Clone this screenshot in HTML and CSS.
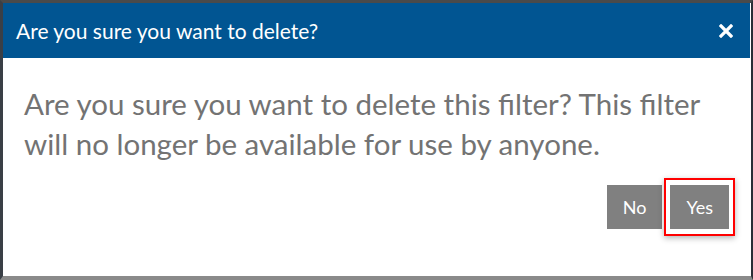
FILE: index.html
```html
<!DOCTYPE html>
<html lang="en">
<head>
    <meta charset="UTF-8">
    <meta name="viewport" content="width=device-width, initial-scale=1.0">
    <title>Delete filter</title>
    <link rel="stylesheet" href="styles.css">
</head>
<body>
    <div class="modal">
        <div class="modal-header">
            <h2 class="modal-title">Are you sure you want to delete?</h2>
            <button class="modal-close" aria-label="Close">
                <svg width="14" height="14" viewBox="0 0 14 14">
                    <path d="M2 2 L12 12 M12 2 L2 12" stroke="#fff" stroke-width="3.2" stroke-linecap="square"/>
                </svg>
            </button>
        </div>
        <div class="modal-body">
            <p class="modal-message">Are you sure you want to delete this filter? This filter will no longer be available for use by anyone.</p>
            <div class="modal-actions">
                <button class="btn">No</button>
                <span class="highlight"><button class="btn">Yes</button></span>
            </div>
        </div>
    </div>
</body>
</html>
```

FILE: styles.css
```css
body {
    margin: 0;
    padding: 0;
    background-color: #1c2a3a;
    font-family: Lato, "Open Sans", sans-serif;
}

.modal {
    width: 748px;
    height: 273px;
    background-color: #fff;
    border-top: 3px solid #4a4a4a;
    border-left: 3px solid #3a3f46;
    border-right: 2px solid #2a2f36;
    border-bottom: 4px solid #8a8a8a;
    display: flex;
    flex-direction: column;
}

.modal-header {
    height: 55px;
    background-color: #015592;
    display: flex;
    align-items: center;
    justify-content: space-between;
    padding: 0 17px 0 13px;
    margin-right: 1px;
}

.modal-title {
    margin: 0;
    color: #fff;
    font-size: 21px;
    font-weight: normal;
}

.modal-close {
    background: none;
    border: none;
    padding: 0;
    display: flex;
}

.modal-body {
    flex: 1;
    padding: 26px 16px 0 21px;
}

.modal-message {
    margin: 0;
    color: #737373;
    font-size: 29.5px;
    line-height: 40px;
}

.modal-actions {
    display: flex;
    justify-content: flex-end;
    align-items: center;
    margin-top: 14px;
}

.btn {
    background-color: #808080;
    color: #fff;
    border: none;
    font-family: Lato, "Open Sans", sans-serif;
    font-size: 18px;
    height: 44px;
    padding: 0 16px;
}

.highlight {
    display: flex;
    margin-left: 2px;
    padding: 5px 4px;
    border: 2px solid #f00;
    box-shadow: 0 2px 6px rgba(0, 0, 0, 0.3);
}
```
